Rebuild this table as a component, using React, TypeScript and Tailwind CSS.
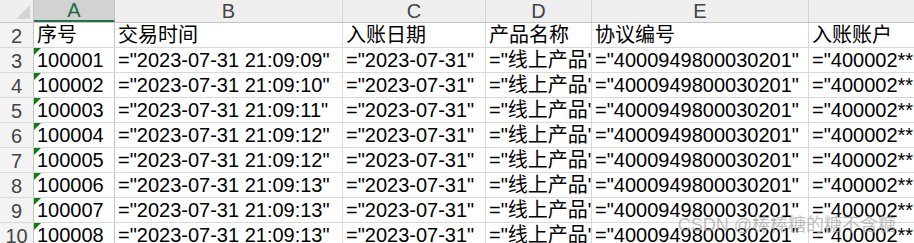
const cols = ["A", "B", "C", "D", "E", "F"];
const widths = ["w-[81px]", "w-[228px]", "w-[143px]", "w-[106px]", "w-[217px]", "w-[260px]"];

const header = ["序号", "交易时间", "入账日期", "产品名称", "协议编号", "入账账户"];

const times = ["09", "10", "11", "12", "12", "13", "13", "13"];

const rows = times.map((s, i) => [
  `10000${i + 1}`,
  `="2023-07-31 21:09:${s}"`,
  `="2023-07-31"`,
  `="线上产品"`,
  `="4000949800030201"`,
  `="400002**`,
]);

function Cell({ w, text, flag, first }: { w: string; text: string; flag?: boolean; first?: boolean }) {
  return (
    <div
      className={`relative ${w} shrink-0 h-full overflow-hidden whitespace-nowrap border-r border-[#d9d9d9] pl-[3px] flex items-end pb-[1px] ${first ? "border-r-[#c6c6c6]" : ""}`}
    >
      {flag && (
        <div className="absolute left-0 top-0 w-0 h-0 border-t-[7px] border-r-[7px] border-t-[#0f7b0f] border-r-transparent" />
      )}
      <span className="leading-[22px]">{text}</span>
    </div>
  );
}

export default function App() {
  return (
    <div className="relative w-[914px] h-[243px] overflow-hidden bg-white text-[20px] text-black font-['Liberation_Sans','Noto_Sans_CJK_SC',sans-serif]">
      {/* column headers */}
      <div className="flex h-[23px] bg-[#efefef] border-b border-[#c4c4c4]">
        <div className="relative w-[34px] shrink-0 border-r border-[#c4c4c4]">
          <div className="absolute right-[3px] bottom-[3px] w-0 h-0 border-b-[14px] border-l-[14px] border-b-[#d4d4d4] border-l-transparent" />
        </div>
        {cols.map((c, i) => (
          <div
            key={c}
            className={`${widths[i]} shrink-0 h-full flex items-center justify-center leading-none text-[20px] border-r ${
              i === 0
                ? "bg-[#d2d2d2] text-[#1c6b3f] border-[#c4c4c4] border-b-[2px] border-b-[#217346] -mb-[1px]"
                : "text-[#444] border-[#d6d6d6]"
            }`}
          >
            {c}
          </div>
        ))}
      </div>

      {/* header row 2 */}
      <div className="flex h-[25px] border-b border-[#d9d9d9]">
        <div className="w-[34px] shrink-0 bg-[#f3f3f3] border-r border-[#c4c4c4] text-[#444] flex items-end justify-center leading-[22px]">
          2
        </div>
        {header.map((h, i) => (
          <Cell key={h} w={widths[i]} text={h} first={i === 0} />
        ))}
      </div>

      {rows.map((r, ri) => (
        <div key={ri} className="flex h-[25px] border-b border-[#d9d9d9]">
          <div className="w-[34px] shrink-0 bg-[#f3f3f3] border-r border-[#c4c4c4] text-[#444] flex items-end justify-center leading-[22px]">
            {ri + 3}
          </div>
          {r.map((t, i) => (
            <Cell key={i} w={widths[i]} text={t} flag={i === 0} first={i === 0} />
          ))}
        </div>
      ))}

      {/* watermark */}
      <div className="absolute right-[18px] bottom-[4px] text-[18px] text-[#a8a8a8]/75 whitespace-nowrap">
        CSDN @棒棒糖的糖不含糖
      </div>
    </div>
  );
}
